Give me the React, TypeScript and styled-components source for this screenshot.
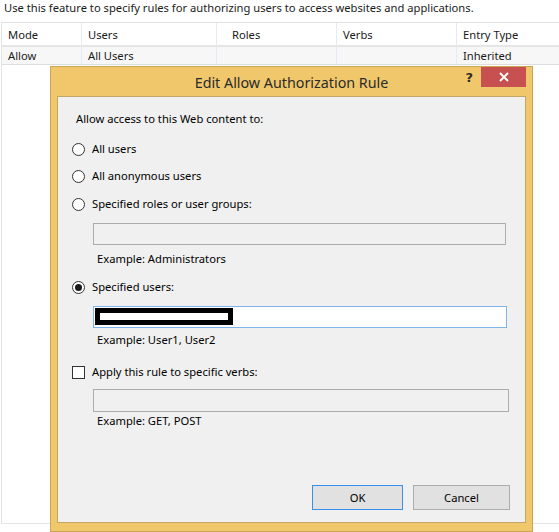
import React from "react";
import styled, { createGlobalStyle } from "styled-components";

const Global = createGlobalStyle`
  html, body { margin: 0; padding: 0; background: #ffffff; }
  body { font-family: "Noto Sans", "Open Sans", sans-serif; font-size: 11.2px; color: #000; }
  * { box-sizing: border-box; }
`;

const Page = styled.div`
  position: relative;
  width: 559px;
  height: 532px;
  overflow: hidden;
  background: #fff;
`;

const Intro = styled.div`
  height: 22px;
  padding-left: 4px;
  line-height: 15px;
  color: #1a1a1a;
  white-space: nowrap;
`;

const ListView = styled.div`
  margin-left: 1px;
  height: 502px;
  border-top: 1px solid #e3e3e3;
  border-left: 1px solid #e3e3e3;
  border-bottom: 1px solid #e3e3e3;
`;

const Row = styled.div<{ $h: number; $header?: boolean }>`
  display: grid;
  grid-template-columns: 80px 135px 120px 120px 1fr;
  height: ${(p) => p.$h}px;
  background: ${(p) => (p.$header ? "#fff" : "#f7f7f7")};
  border-bottom: 1px solid ${(p) => (p.$header ? "#e6e6e6" : "#dedede")};
  ${(p) => (p.$header ? "" : "border-top: 1px solid #e6e6e6;")}
`;

const Cell = styled.div<{ $pad?: number }>`
  display: flex;
  align-items: center;
  padding-left: ${(p) => p.$pad ?? 6}px;
  border-right: 1px solid #e4ebf4;
  white-space: nowrap;
  color: #1a1a1a;
  &:last-child { border-right: none; }
`;

const Dialog = styled.div`
  position: absolute;
  left: 50px;
  top: 66px;
  width: 483px;
  height: 466px;
  background: #f0c76b;
  border: 1px solid #caa552;
  padding: 0 6px 8px 6px;
  display: flex;
  flex-direction: column;
`;

const TitleBar = styled.div`
  position: relative;
  height: 29px;
  display: flex;
  align-items: center;
  justify-content: center;
  font-size: 14.3px;
  color: #2b2b2b;
  padding-top: 1px;
`;

const Help = styled.div`
  position: absolute;
  right: 53px;
  top: 3px;
  font-size: 13px;
  font-weight: bold;
  color: #2b2b2b;
  font-family: "DejaVu Sans", sans-serif;
`;

const Close = styled.div`
  position: absolute;
  right: 0;
  top: 0;
  width: 45px;
  height: 20px;
  background: #c75050;
  display: flex;
  align-items: center;
  justify-content: center;
`;

const Body = styled.div`
  flex: 1;
  background: #f0f0f0;
  border: 1px solid #c2a666;
  display: flex;
  flex-direction: column;
  padding: 0 15px 12px 14px;
`;

const Line = styled.div<{ $top: number; $indent?: number }>`
  margin-top: ${(p) => p.$top}px;
  margin-left: ${(p) => p.$indent ?? 0}px;
  height: 16px;
  line-height: 16px;
  display: flex;
  align-items: center;
  white-space: nowrap;
`;

const Radio = styled.span<{ $on?: boolean }>`
  width: 13px;
  height: 13px;
  border-radius: 50%;
  border: 1px solid #333;
  background: #fff;
  margin-right: 7px;
  display: inline-flex;
  align-items: center;
  justify-content: center;
  &::after {
    content: "";
    width: 7px;
    height: 7px;
    border-radius: 50%;
    background: ${(p) => (p.$on ? "#1a1a1a" : "transparent")};
  }
`;

const Check = styled.span`
  width: 13px;
  height: 13px;
  border: 1px solid #333;
  background: #fff;
  margin-right: 7px;
`;

const Field = styled.div<{ $top: number; $w: number; $h: number; $active?: boolean }>`
  margin-top: ${(p) => p.$top}px;
  margin-left: 21px;
  width: ${(p) => p.$w}px;
  height: ${(p) => p.$h}px;
  border: 1px solid ${(p) => (p.$active ? "#7eb4ea" : "#adadad")};
  background: ${(p) => (p.$active ? "#fff" : "#f0f0f0")};
  padding: 1px 0 0 1px;
`;

const Redaction = styled.div`
  width: 138px;
  height: 17px;
  background: #000;
  padding: 5px;
  &::after {
    content: "";
    display: block;
    width: 128px;
    height: 7px;
    background: #fff;
  }
`;

const Hint = styled(Line)`
  margin-left: 25px;
`;

const Buttons = styled.div`
  margin-top: auto;
  display: flex;
  justify-content: flex-end;
  gap: 10px;
`;

const Button = styled.div<{ $w: number; $focus?: boolean }>`
  width: ${(p) => p.$w}px;
  height: 25px;
  border: 1px solid ${(p) => (p.$focus ? "#3c8fe9" : "#adadad")};
  background: #e1e1e1;
  display: flex;
  align-items: center;
  justify-content: center;
  color: #000;
`;

export default function App() {
  return (
    <Page>
      <Global />
      <Intro>Use this feature to specify rules for authorizing users to access websites and applications.</Intro>
      <ListView>
        <Row $h={23} $header>
          <Cell $pad={6}>Mode</Cell>
          <Cell>Users</Cell>
          <Cell $pad={15}>Roles</Cell>
          <Cell>Verbs</Cell>
          <Cell>Entry Type</Cell>
        </Row>
        <Row $h={19}>
          <Cell $pad={6}>Allow</Cell>
          <Cell>All Users</Cell>
          <Cell />
          <Cell />
          <Cell>Inherited</Cell>
        </Row>
      </ListView>
      <Dialog>
        <TitleBar>
          Edit Allow Authorization Rule
          <Help>?</Help>
          <Close>
            <svg width="10" height="10" viewBox="0 0 10 10">
              <path d="M1 1 L9 9 M9 1 L1 9" stroke="#fff" strokeWidth="1.8" />
            </svg>
          </Close>
        </TitleBar>
        <Body>
          <Line $top={14} $indent={4}>Allow access to this Web content to:</Line>
          <Line $top={14}><Radio />All users</Line>
          <Line $top={11}><Radio />All anonymous users</Line>
          <Line $top={12}><Radio />Specified roles or user groups:</Line>
          <Field $top={11} $w={413} $h={22} />
          <Hint $top={6}>Example: Administrators</Hint>
          <Line $top={12}><Radio $on />Specified users:</Line>
          <Field $top={11} $w={414} $h={22} $active>
            <Redaction />
          </Field>
          <Hint $top={4}>Example: User1, User2</Hint>
          <Line $top={16}><Check />Apply this rule to specific verbs:</Line>
          <Field $top={9} $w={416} $h={23} />
          <Hint $top={1}>Example: GET, POST</Hint>
          <Buttons>
            <Button $w={91} $focus>OK</Button>
            <Button $w={97}>Cancel</Button>
          </Buttons>
        </Body>
      </Dialog>
    </Page>
  );
}
